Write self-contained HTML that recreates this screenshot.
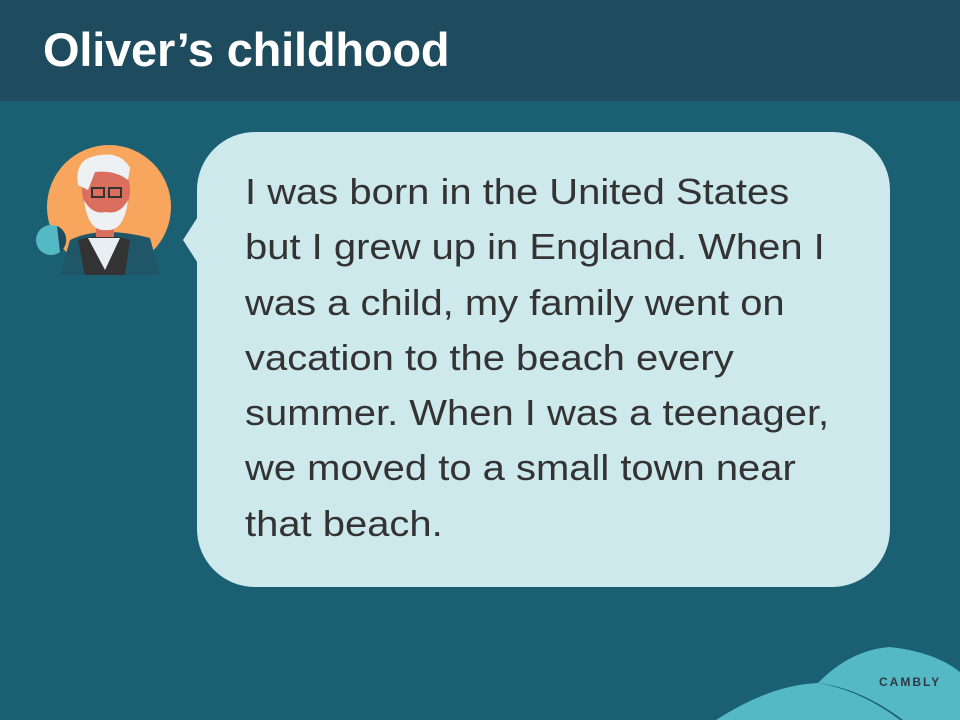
<!DOCTYPE html>
<html><head><style>
html,body{margin:0;padding:0}
body{width:960px;height:720px;background:#1a6072;position:relative;overflow:hidden;font-family:"Liberation Sans",Arial,sans-serif}
.hdr{position:absolute;left:0;top:0;width:960px;height:101px;background:#1f4b5f}
.hdr h1{margin:0;position:absolute;left:43px;top:22px;font-size:47px;font-weight:bold;color:#fff;letter-spacing:-0.2px}
.bub{position:absolute;left:197px;top:132px;width:693px;height:455px;background:#cde9ec;border-radius:58px}
.txt{position:absolute;left:245px;top:164px;font-size:36px;line-height:55.3px;color:#333;white-space:nowrap;transform:scaleX(1.11);transform-origin:0 0}
.logo{position:absolute;left:879px;top:675px;font-size:12px;font-weight:bold;letter-spacing:2px;color:#2e3a44}
</style></head><body>
<div class="hdr"><h1>Oliver’s childhood</h1></div>
<svg width="960" height="720" style="position:absolute;left:0;top:0">
<polygon points="199,215 183,240 199,265" fill="#cde9ec"/>
<circle cx="109" cy="207" r="62" fill="#f8a65e"/>
<clipPath id="c"><circle cx="109" cy="207" r="62"/><rect x="40" y="235" width="140" height="40"/></clipPath>
<g clip-path="url(#c)">
<path d="M70 240 Q100 225 150 238 L160 275 L60 275 Z" fill="#1f5668"/>
<path d="M78 240 L85 275 L125 275 L130 240 Q105 232 78 240Z" fill="#333"/>
<path d="M88 238 L105 270 L120 238 Z" fill="#e8eef2"/>
<rect x="96" y="215" width="18" height="22" fill="#d96f5c"/>
<ellipse cx="106" cy="190" rx="24" ry="30" fill="#d96f5c"/>
<path d="M84 200 Q88 232 106 230 Q124 232 128 200 Q120 215 106 212 Q92 215 84 200Z" fill="#eef1f3"/>
<path d="M78 185 Q74 160 95 156 Q120 150 130 168 L128 180 Q115 170 95 172 L88 190 Z" fill="#eef1f3"/>
<rect x="92" y="188" width="12" height="9" fill="none" stroke="#333" stroke-width="2"/>
<rect x="109" y="188" width="12" height="9" fill="none" stroke="#333" stroke-width="2"/>
</g>
<circle cx="51" cy="240" r="15" fill="#55b9c5"/>
<path d="M57 226 A15 15 0 0 1 60 252 Z" fill="#1f4b5f"/>
<path d="M716 720 Q770 685 818 683 Q860 690 900 720 Z" fill="#55b9c5"/>
<path d="M818 683 Q850 650 890 647 Q935 652 960 672 L960 720 L903 720 Q860 688 818 683Z" fill="#55b9c5"/>
</svg>
<div class="bub"></div>
<div class="txt">I was born in the United States<br>but I grew up in England. When I<br>was a child, my family went on<br>vacation to the beach every<br>summer. When I was a teenager,<br>we moved to a small town near<br>that beach.</div>
<div class="logo">CAMBLY</div>
</body></html>
